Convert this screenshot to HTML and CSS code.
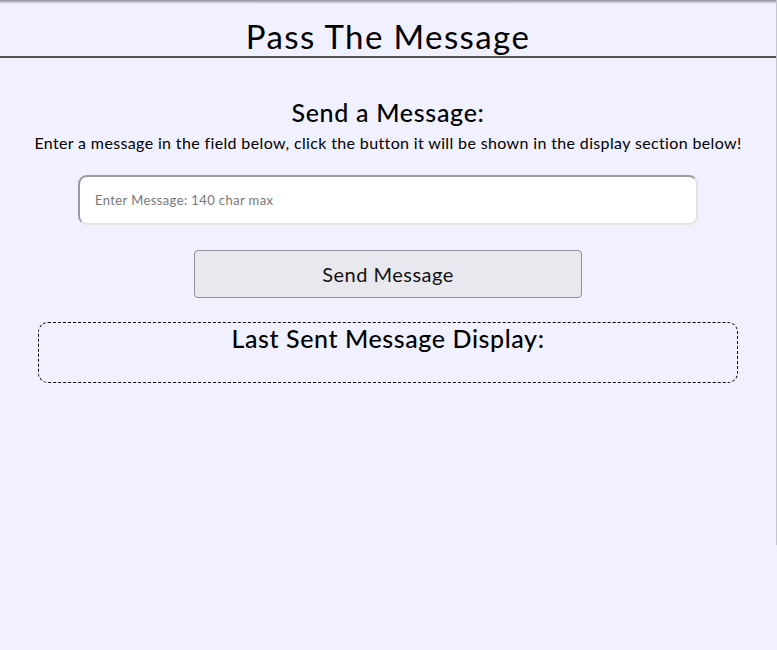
FILE: index.html
```html
<!DOCTYPE html>
<html>
<head>
<meta charset="utf-8">
<link rel="stylesheet" href="styles.css">
</head>
<body>
<div class="page">
  <header class="top">
    <h1 class="title">Pass The Message</h1>
  </header>
  <main class="content">
    <h2 class="sub">Send a Message:</h2>
    <p class="intro">Enter a message in the field below, click the button it will be shown in the display section below!</p>
    <input class="msg" type="text" placeholder="Enter Message: 140 char max">
    <button class="send">Send Message</button>
    <section class="display">
      <h2 class="display-title">Last Sent Message Display:</h2>
    </section>
  </main>
</div>
</body>
</html>
```
FILE: styles.css
```css
html, body {
  margin: 0;
  padding: 0;
}
body {
  font-family: "Lato", "Open Sans", sans-serif;
  color: #000;
  min-height: 650px;
  background: linear-gradient(rgba(60,60,80,0.55), rgba(60,60,80,0) 4px) no-repeat, #f0f0fe;
}
.page {
  width: 776px;
  height: 545px;
  border-right: 1px solid #c4c4cc;
}
.top {
  border-bottom: 2px solid #555;
  height: 56px;
  display: flex;
  justify-content: center;
}
.title {
  margin: 0;
  padding-top: 17px;
  font-size: 33px;
  font-weight: 400;
  line-height: 38px;
  letter-spacing: 1.4px;
}
.content {
  display: flex;
  flex-direction: column;
  align-items: center;
}
.sub {
  margin: 39px 0 0;
  font-size: 25px;
  font-weight: 500;
  line-height: 30px;
  letter-spacing: 0.7px;
}
.intro {
  margin: 6px 0 0;
  font-size: 16px;
  line-height: 20px;
  letter-spacing: 0.36px;
}
.msg {
  margin-top: 22px;
  width: 620px;
  height: 50px;
  box-sizing: border-box;
  border: 2px solid #9a9aa0;
  border-right-color: #e2e2e2;
  border-bottom-color: #e2e2e2;
  border-radius: 9px;
  background: #fff;
  padding: 0 15px;
  font-family: inherit;
  font-size: 13px;
  letter-spacing: 0.4px;
}
.msg::placeholder { color: #777; }
.send {
  margin-top: 25px;
  width: 388px;
  height: 48px;
  background: #e9e8ee;
  border: 1px solid #8f8f9d;
  border-radius: 4px;
  font-family: inherit;
  font-size: 20px;
  letter-spacing: 0.5px;
  color: #111;
}
.display {
  margin-top: 24px;
  width: 700px;
  height: 61px;
  box-sizing: border-box;
  border: 1px dashed #000;
  border-radius: 10px;
  text-align: center;
}
.display-title {
  margin: 0;
  padding-top: 1px;
  font-size: 25px;
  font-weight: 500;
  line-height: 28px;
  letter-spacing: 0.6px;
}
```
